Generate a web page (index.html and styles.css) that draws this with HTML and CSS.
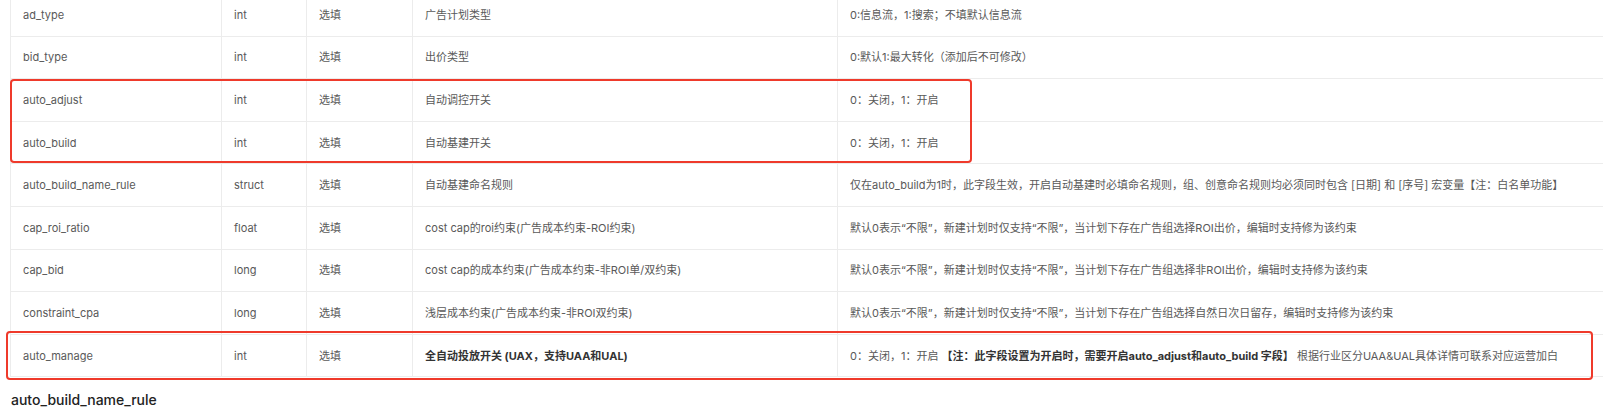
FILE: index.html
```html
<!DOCTYPE html>
<html lang="zh">
<head>
<meta charset="utf-8">
<link rel="stylesheet" href="styles.css">
</head>
<body>
<div class="doc">
  <div class="table-wrap">
    <table class="params">
      <colgroup>
        <col class="c-name"><col class="c-type"><col class="c-req"><col class="c-desc"><col class="c-note">
      </colgroup>
      <tbody>
        <tr><td>ad_type</td><td>int</td><td>选填</td><td>广告计划类型</td><td>0:信息流，1:搜索；不填默认信息流</td></tr>
        <tr><td>bid_type</td><td>int</td><td>选填</td><td>出价类型</td><td>0:默认1:最大转化（添加后不可修改）</td></tr>
        <tr><td>auto_adjust</td><td>int</td><td>选填</td><td>自动调控开关</td><td>0：关闭，1：开启</td></tr>
        <tr><td>auto_build</td><td>int</td><td>选填</td><td>自动基建开关</td><td>0：关闭，1：开启</td></tr>
        <tr><td>auto_build_name_rule</td><td>struct</td><td>选填</td><td>自动基建命名规则</td><td>仅在auto_build为1时，此字段生效，开启自动基建时必填命名规则，组、创意命名规则均必须同时包含 [日期] 和 [序号] 宏变量【注：白名单功能】</td></tr>
        <tr><td>cap_roi_ratio</td><td>float</td><td>选填</td><td>cost cap的roi约束(广告成本约束-ROI约束)</td><td>默认0表示“不限”，新建计划时仅支持“不限”，当计划下存在广告组选择ROI出价，编辑时支持修为该约束</td></tr>
        <tr><td>cap_bid</td><td>long</td><td>选填</td><td>cost cap的成本约束(广告成本约束-非ROI单/双约束)</td><td>默认0表示“不限”，新建计划时仅支持“不限”，当计划下存在广告组选择非ROI出价，编辑时支持修为该约束</td></tr>
        <tr><td>constraint_cpa</td><td>long</td><td>选填</td><td>浅层成本约束(广告成本约束-非ROI双约束)</td><td>默认0表示“不限”，新建计划时仅支持“不限”，当计划下存在广告组选择自然日次日留存，编辑时支持修为该约束</td></tr>
        <tr><td>auto_manage</td><td>int</td><td>选填</td><td><strong>全自动投放开关 (UAX，支持UAA和UAL)</strong></td><td>0：关闭，1：开启 <strong>【注：此字段设置为开启时，需要开启auto_adjust和auto_build 字段】</strong> 根据行业区分UAA&amp;UAL具体详情可联系对应运营加白</td></tr>
      </tbody>
    </table>
    <div class="mark mark-a"></div>
    <div class="mark mark-b"></div>
  </div>
  <h3 class="section-title">auto_build_name_rule</h3>
</div>
</body>
</html>
```

FILE: styles.css
```css
html, body {
  margin: 0;
  padding: 0;
  background: #ffffff;
  overflow: hidden;
}
.doc {
  font-family: "Inter", "Noto Sans CJK SC", sans-serif;
  color: #595959;
}
.table-wrap {
  position: relative;
  margin-top: -7px;
  padding-left: 10px;
}
.params {
  border-collapse: collapse;
  table-layout: fixed;
  width: 1640px;
  font-size: 11px;
}
.c-name { width: 211px; }
.c-type { width: 85px; }
.c-req { width: 106px; }
.c-desc { width: 425px; }
.c-note { width: 813px; }
.params td {
  border: 1px solid #ececec;
  height: 42.6px;
  box-sizing: border-box;
  padding: 0 12px;
  line-height: 20px;
  white-space: nowrap;
  vertical-align: middle;
}
.params strong {
  color: #333333;
  font-weight: 700;
}
.mark {
  position: absolute;
  border: 2px solid #ef3a2b;
  border-radius: 4px;
  box-sizing: border-box;
  pointer-events: none;
}
.mark-a {
  left: 10px;
  top: 86px;
  width: 962px;
  height: 84px;
}
.mark-b {
  left: 6px;
  top: 338px;
  width: 1587px;
  height: 49px;
}
.section-title {
  margin: 12px 0 0 11px;
  font-size: 14px;
  line-height: 22px;
  font-weight: 500;
  color: #222222;
}
```
